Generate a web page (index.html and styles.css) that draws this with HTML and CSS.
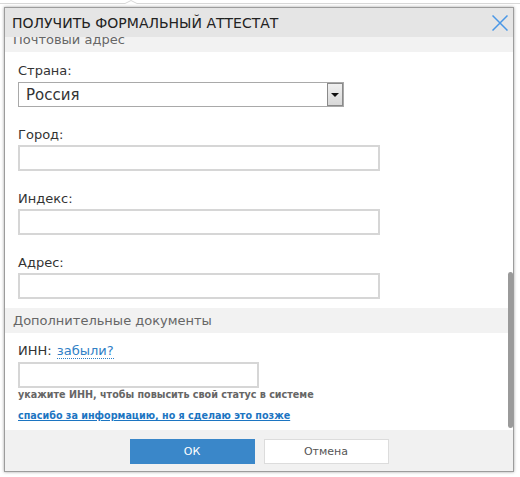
FILE: index.html
```html
<!DOCTYPE html>
<html lang="ru">
<head>
<meta charset="utf-8">
<title>Получить формальный аттестат</title>
<link rel="stylesheet" href="styles.css">
</head>
<body>
<svg class="backdrop" width="520" height="8" viewBox="0 0 520 8"><polyline points="0,3.5 125,3.5 131,0.5 137,3.5 520,3.5" fill="none" stroke="#d8d8d8" stroke-width="1"/></svg>
<div class="dialog">
  <div class="header">
    <span class="title">ПОЛУЧИТЬ ФОРМАЛЬНЫЙ АТТЕСТАТ</span>
    <svg class="close" width="16" height="16" viewBox="0 0 16 16"><path d="M0.5 0.5 L15.5 15.5 M15.5 0.5 L0.5 15.5" stroke="#4a97e6" stroke-width="1.5" fill="none"/></svg>
  </div>
  <div class="body">
    <div class="inner">
      <div class="section">Почтовый адрес</div>
      <div class="fields first">
        <div class="group">
          <div class="label">Страна:</div>
          <div class="select"><span class="select-value">Россия</span><span class="select-btn"><span class="tri"></span></span></div>
        </div>
        <div class="group">
          <div class="label">Город:</div>
          <div class="input wide"></div>
        </div>
        <div class="group">
          <div class="label">Индекс:</div>
          <div class="input wide"></div>
        </div>
        <div class="group">
          <div class="label">Адрес:</div>
          <div class="input wide"></div>
        </div>
      </div>
      <div class="section">Дополнительные документы</div>
      <div class="fields second">
        <div class="label">ИНН: <a class="forgot" href="#">забыли?</a></div>
        <div class="input narrow"></div>
        <div class="hint">укажите ИНН, чтобы повысить свой статус в системе</div>
        <a class="later" href="#">спасибо за информацию, но я сделаю это позже</a>
      </div>
    </div>
    <div class="scroll-thumb"></div>
  </div>
  <div class="footer">
    <button class="btn ok">ОК</button>
    <button class="btn cancel">Отмена</button>
  </div>
</div>
</body>
</html>
```
FILE: styles.css
```css
* { box-sizing: border-box; }
html, body { margin: 0; padding: 0; }
body {
  background: #fff;
  font-family: "DejaVu Sans", Verdana, sans-serif;
  width: 520px;
  height: 477px;
  overflow: hidden;
  position: relative;
}
.backdrop { position: absolute; left: 0; top: 0; }
.dialog {
  position: relative;
  margin: 7px 0 0 4px;
  width: 510px;
  height: 465px;
  border: 1px solid #9c9c9c;
  box-shadow: 0 0 3px rgba(0,0,0,0.35);
  background: #fff;
  display: flex;
  flex-direction: column;
}
.header {
  height: 29px;
  flex: none;
  background: #e5e5e5;
  display: flex;
  align-items: center;
  padding: 0 5px 0 7px;
}
.title {
  font-size: 14px;
  color: #222;
}
.close { margin-left: auto; }
.body {
  flex: 1;
  position: relative;
  overflow: hidden;
}
.inner { margin-top: -10px; }
.section {
  height: 25px;
  line-height: 25px;
  background: #f2f2f2;
  color: #666;
  font-size: 13px;
  padding-left: 8px;
}
.fields { padding: 0 13px; }
.fields.first { padding-top: 11px; padding-bottom: 9px; }
.fields.second { padding-top: 10px; }
.group + .group { margin-top: 20px; }
.label {
  font-size: 13px;
  line-height: 16px;
  color: #333;
  margin-bottom: 2px;
}
.group:first-child .label { margin-bottom: 3px; }
.select {
  width: 326px;
  height: 25px;
  border: 1px solid #a9a9a9;
  display: flex;
  align-items: stretch;
  background: #fff;
}
.select-value {
  flex: 1;
  font-size: 15px;
  color: #333;
  padding-left: 7px;
  line-height: 24px;
}
.select-btn {
  width: 16px;
  border: 1px solid #8a8a8a;
  background: linear-gradient(#f0f0f0, #d8d8d8);
  display: flex;
  align-items: center;
  justify-content: center;
}
.tri {
  width: 0; height: 0;
  border-left: 4px solid transparent;
  border-right: 4px solid transparent;
  border-top: 4px solid #111;
}
.input {
  height: 26px;
  border: 2px solid #d6d6d6;
  background: #fff;
}
.input.wide { width: 362px; }
.input.narrow { width: 241px; margin-top: 3px; }
.forgot {
  color: #2f80c6;
  text-decoration: none;
  border-bottom: 1px dotted #2f80c6;
  margin-left: 1px;
}
.hint {
  font-size: 9.6px;
  font-weight: bold;
  color: #666;
  line-height: 14px;
}
.later {
  display: block;
  margin-top: 7px;
  font-size: 9.6px;
  font-weight: bold;
  line-height: 14px;
  color: #1c75c2;
  text-decoration: underline;
}
.scroll-thumb {
  position: absolute;
  right: 0;
  top: 235px;
  width: 5px;
  height: 156px;
  background: #9a9a9a;
  border-radius: 3px;
}
.footer {
  height: 41px;
  flex: none;
  background: #f1f1f1;
  display: flex;
  justify-content: center;
  align-items: flex-start;
  gap: 9px;
  padding-top: 9px;
}
.btn {
  width: 125px;
  height: 25px;
  font-family: "DejaVu Sans", Verdana, sans-serif;
  font-size: 11px;
  padding: 0;
  cursor: pointer;
}
.btn.ok {
  background: #3a87c9;
  color: #fff;
  border: 1px solid #3a87c9;
}
.btn.cancel {
  background: #fff;
  color: #555;
  border: 1px solid #dcdcdc;
}
```
